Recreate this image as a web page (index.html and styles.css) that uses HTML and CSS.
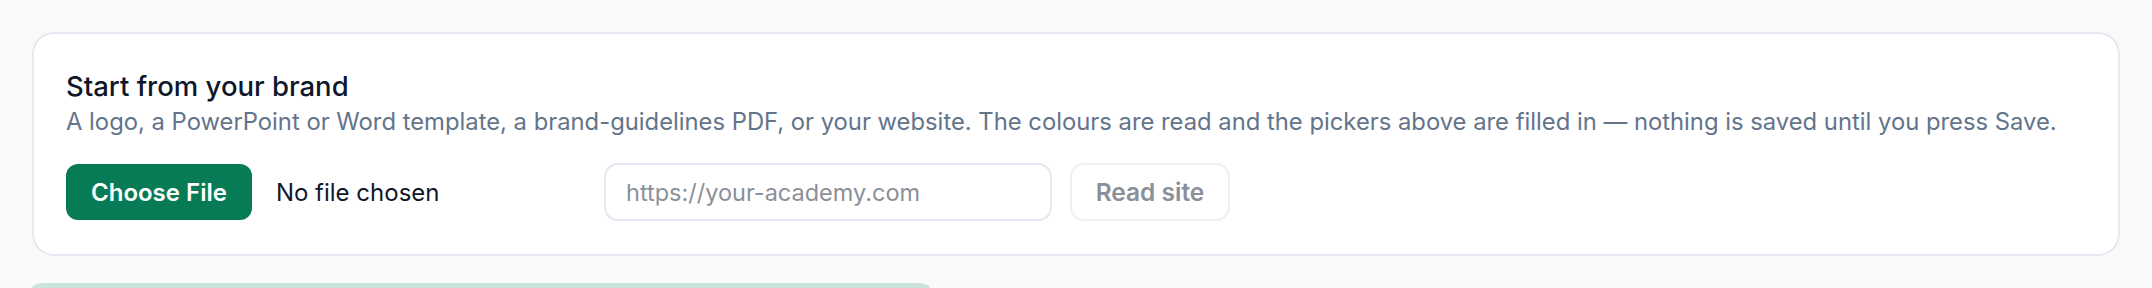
FILE: index.html
```html
<!DOCTYPE html>
<html lang="en">
<head>
<meta charset="utf-8">
<title>Start from your brand</title>
<link rel="stylesheet" href="styles.css">
</head>
<body>
<main class="page">
  <section class="card">
    <h2 class="title">Start from your brand</h2>
    <p class="desc">A logo, a PowerPoint or Word template, a brand-guidelines PDF, or your website. The colours are read and the pickers above are filled in — nothing is saved until you press Save.</p>
    <div class="row">
      <label class="file">
        <span class="file-btn">Choose File</span>
        <span class="file-name">No file chosen</span>
      </label>
      <input class="url" type="text" placeholder="https://your-academy.com">
      <button class="read" type="button">Read site</button>
    </div>
  </section>
  <section class="next"></section>
</main>
</body>
</html>
```
FILE: styles.css
```css
* { box-sizing: border-box; }
html, body { margin: 0; padding: 0; }
body {
  background: #fafafa;
  font-family: Inter, "Noto Sans", sans-serif;
  width: 2152px;
  height: 288px;
  overflow: hidden;
}
.page {
  padding: 32px 32px 0;
  display: flex;
  flex-direction: column;
  gap: 27px;
}
.card {
  background: #ffffff;
  border: 2px solid #e4e8f0;
  border-radius: 22px;
  padding: 32px 32px 33px;
}
.title {
  margin: 0;
  font-size: 27.5px;
  line-height: 40px;
  font-weight: 500;
  color: #0f172a;
}
.desc {
  margin: 0;
  font-size: 23.8px;
  line-height: 32px;
  color: #64748b;
}
.row {
  margin-top: 25px;
  display: flex;
  align-items: center;
  gap: 18px;
  height: 58px;
}
.file {
  width: 520px;
  display: flex;
  align-items: center;
  gap: 24px;
}
.file-btn {
  height: 56px;
  display: inline-flex;
  align-items: center;
  padding: 0 25px;
  background: #077a56;
  color: #ffffff;
  border-radius: 12px;
  font-size: 24px;
  font-weight: 600;
}
.file-name {
  font-size: 24px;
  color: #0f172a;
}
.url {
  width: 448px;
  height: 58px;
  border: 2px solid #e3e8f0;
  border-radius: 14px;
  padding: 0 20px;
  font-family: inherit;
  font-size: 23.5px;
  color: #0f172a;
  background: #fff;
  outline: none;
}
.url::placeholder { color: #8b8f97; }
.read {
  width: 160px;
  height: 58px;
  border: 2px solid #eef0f4;
  border-radius: 14px;
  background: #fff;
  font-family: inherit;
  font-size: 24.5px;
  font-weight: 600;
  color: #8a8f98;
  padding: 0;
}
.next {
  width: 898px;
  height: 5px;
  background: #cbe4da;
  border-radius: 14px 14px 0 0 / 5px 5px 0 0;
}
```
